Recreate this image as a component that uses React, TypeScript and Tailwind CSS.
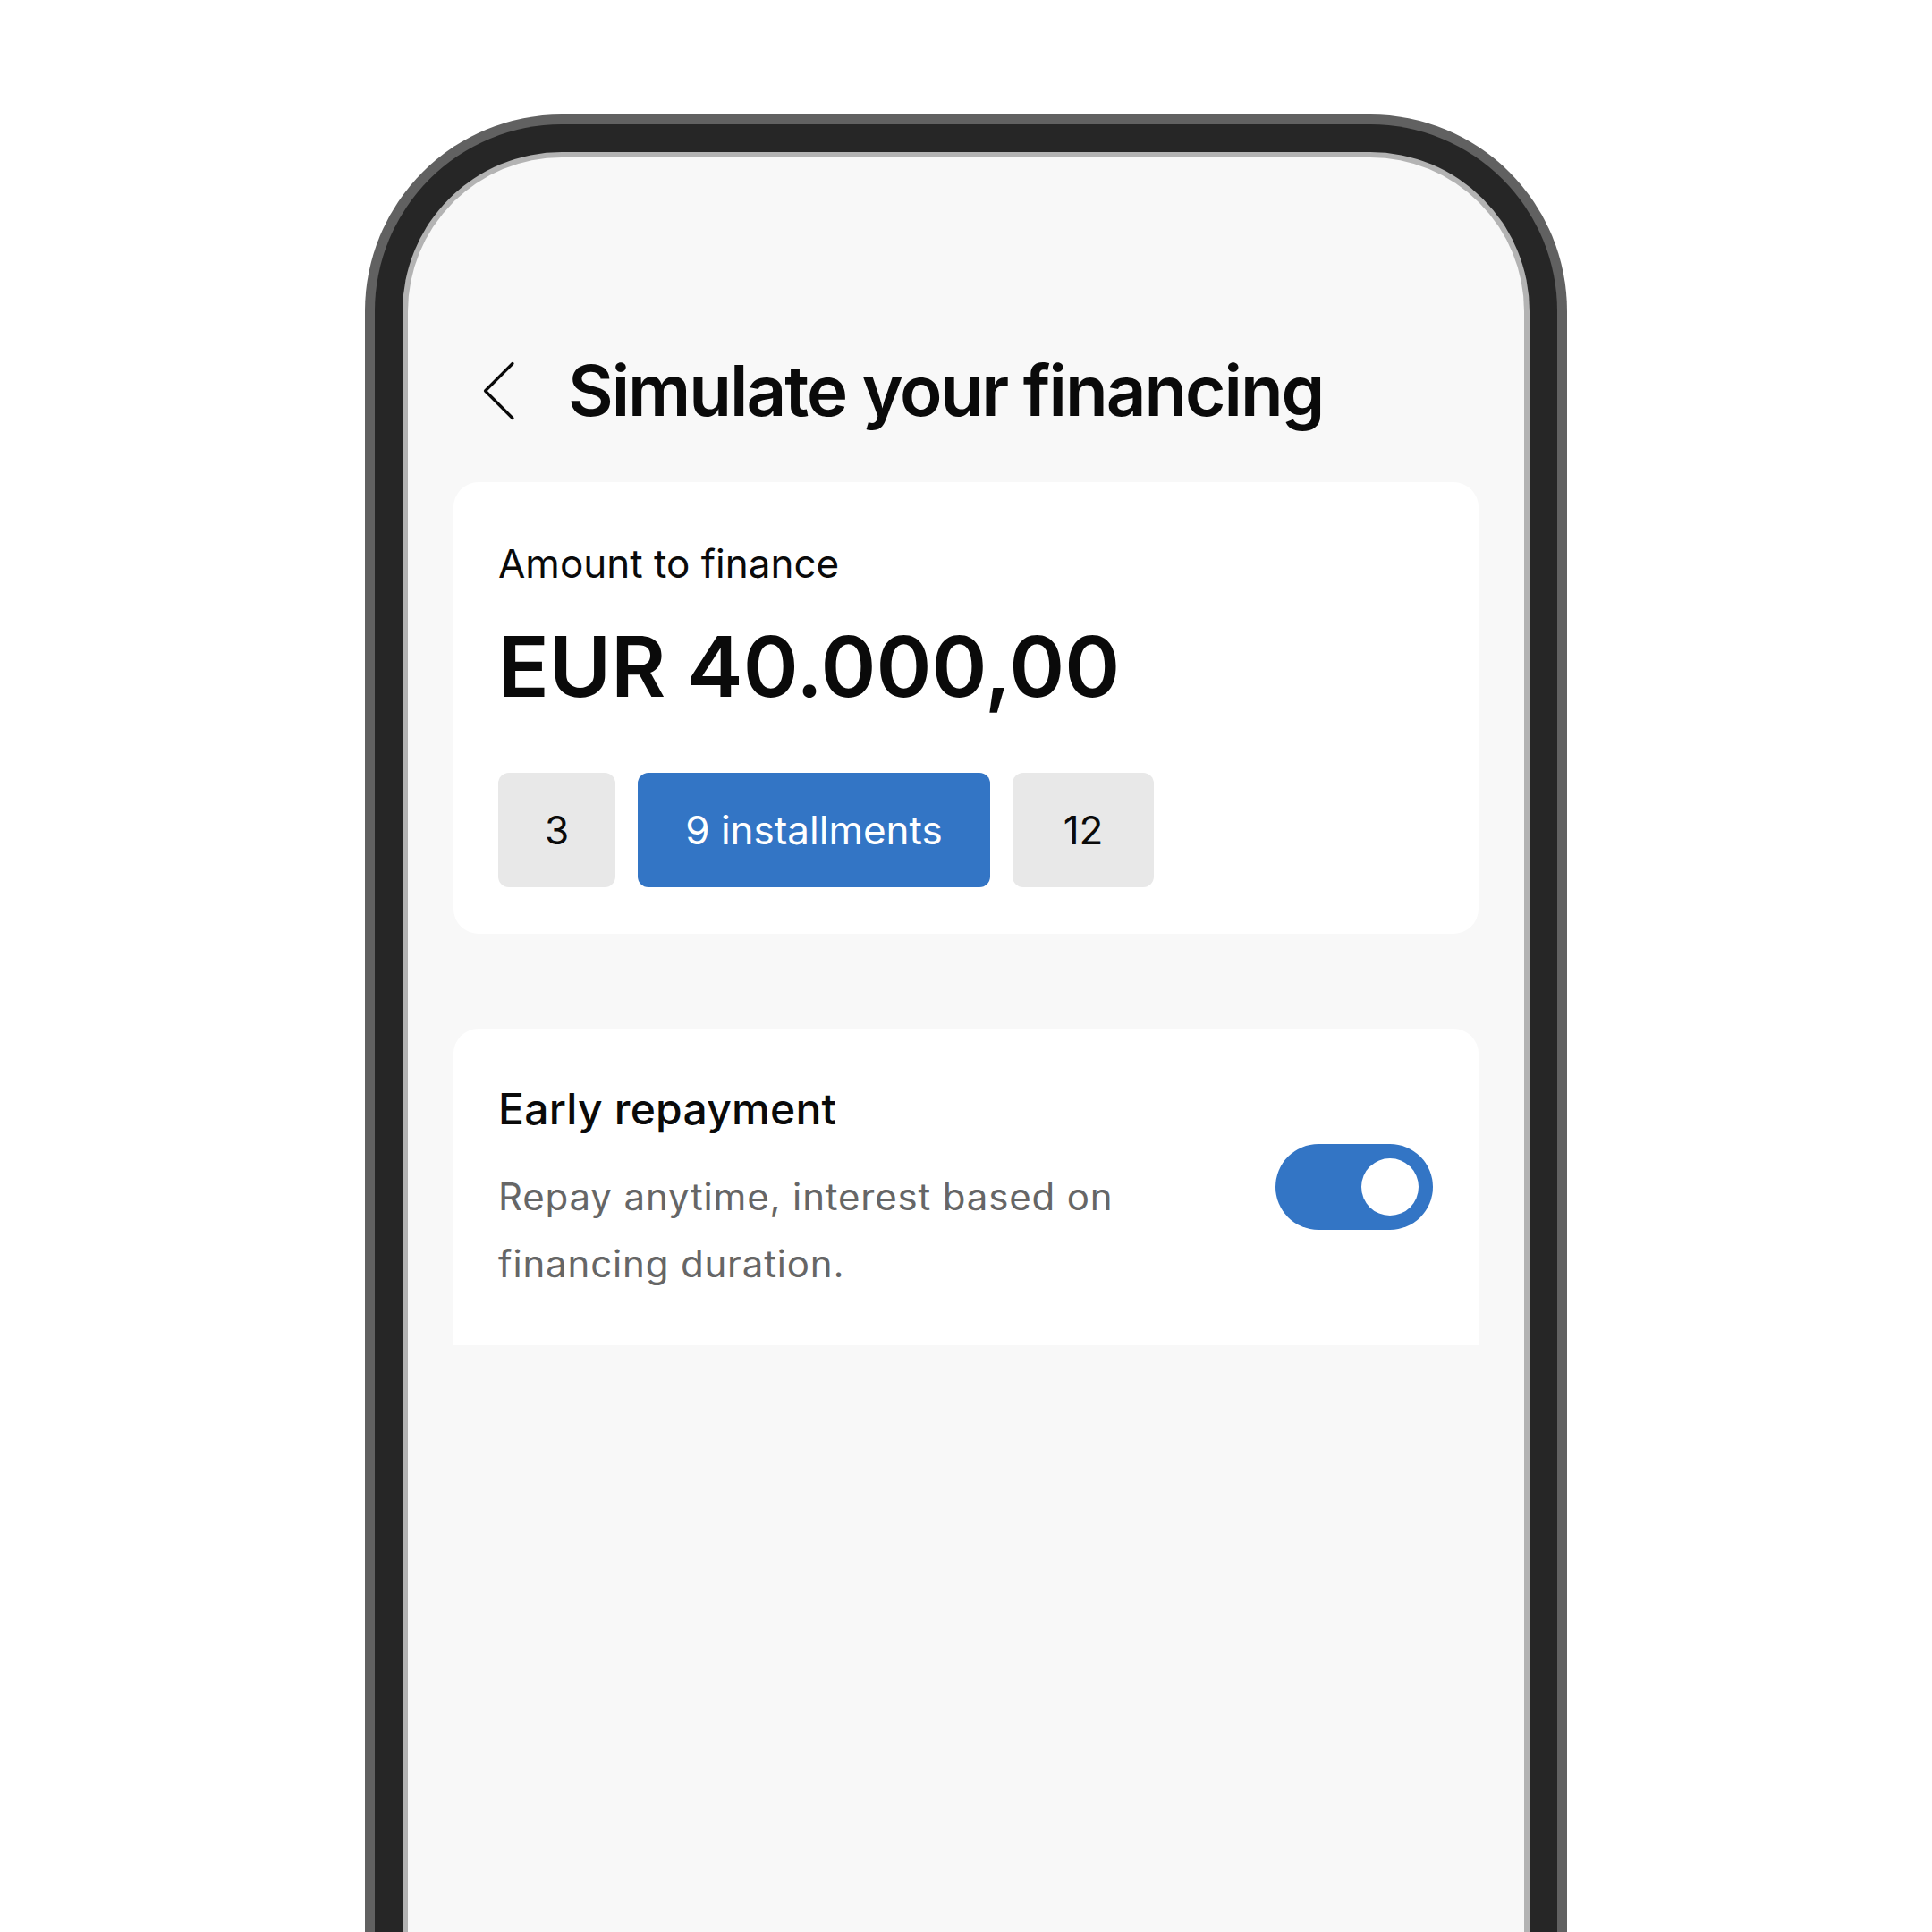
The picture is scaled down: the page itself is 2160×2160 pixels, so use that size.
import React, { useState } from 'react';

const options = [
  { value: 3, width: 'w-[131px]' },
  { value: 9, width: 'w-[394px]' },
  { value: 12, width: 'w-[158px]' },
];

export default function App() {
  const [installments, setInstallments] = useState(9);
  const [early, setEarly] = useState(true);

  return (
    <div
      className="h-[2160px] w-full overflow-hidden bg-white flex justify-center pt-[128px]"
      style={{ fontFamily: 'Inter, "Noto Sans", sans-serif' }}
    >
      {/* phone frame */}
      <div className="w-[1344px] h-[2200px] shrink-0 rounded-t-[220px] bg-[#616161] px-[11px] pt-[11px]">
        <div className="h-full rounded-t-[209px] bg-[#262626] px-[31px] pt-[31px]">
          <div className="h-full rounded-t-[178px] bg-[#b3b3b3] px-[6px] pt-[6px]">
            <div className="h-full rounded-t-[172px] bg-[#f8f8f8] pl-[51px] pr-[51px] pt-[211px]">
              {/* header */}
              <div className="flex items-center h-[100px] mb-[52px]">
                <button className="ml-[31px] w-[40px] h-[70px] flex items-center justify-center">
                  <svg width="40" height="70" viewBox="0 0 40 70" fill="none">
                    <path
                      d="M35 4.5 L4.5 35 L35 65.5"
                      stroke="#0a0a0a"
                      strokeWidth="3.2"
                      strokeLinecap="round"
                      strokeLinejoin="round"
                    />
                  </svg>
                </button>
                <h1 className="ml-[57px] text-[78px] leading-[100px] font-semibold text-[#0a0a0a] tracking-[-0.026em]">
                  Simulate your financing
                </h1>
              </div>

              {/* amount card */}
              <div className="bg-white rounded-[28px] pt-[65px] pb-[52px] px-[50px]">
                <p className="text-[44px] leading-[53px] text-[#0a0a0a]">Amount to finance</p>
                <p className="mt-[41px] text-[94px] leading-[94px] font-semibold text-[#0a0a0a]">
                  EUR 40.000,00
                </p>
                <div className="mt-[72px] flex gap-[25px]">
                  {options.map((o) => (
                    <button
                      key={o.value}
                      onClick={() => setInstallments(o.value)}
                      className={`${o.width} h-[128px] flex items-center justify-center rounded-[12px] text-[44px] leading-none ${
                        installments === o.value ? 'bg-[#3375c5] text-white' : 'bg-[#e8e8e8] text-[#0a0a0a]'
                      }`}
                    >
                      {installments === o.value ? `${o.value} installments` : o.value}
                    </button>
                  ))}
                </div>
              </div>

              {/* early repayment */}
              <div className="mt-[106px] bg-white rounded-t-[28px] pt-[62px] pb-[54px] pl-[50px] pr-[51px] flex items-start justify-between">
                <div>
                  <p className="text-[48px] leading-[56px] font-medium text-[#0a0a0a] tracking-[0.005em]">
                    Early repayment
                  </p>
                  <p className="mt-[32px] text-[42px] leading-[75px] text-[#666666] tracking-[0.02em]">
                    Repay anytime, interest based on
                    <br />
                    financing duration.
                  </p>
                </div>
                <button
                  onClick={() => setEarly(!early)}
                  className={`mt-[67px] w-[176px] h-[96px] rounded-full p-[16px] flex ${
                    early ? 'bg-[#3375c5] justify-end' : 'bg-[#d4d4d4] justify-start'
                  }`}
                >
                  <span className="block w-[64px] h-[64px] rounded-full bg-white" />
                </button>
              </div>
            </div>
          </div>
        </div>
      </div>
    </div>
  );
}
